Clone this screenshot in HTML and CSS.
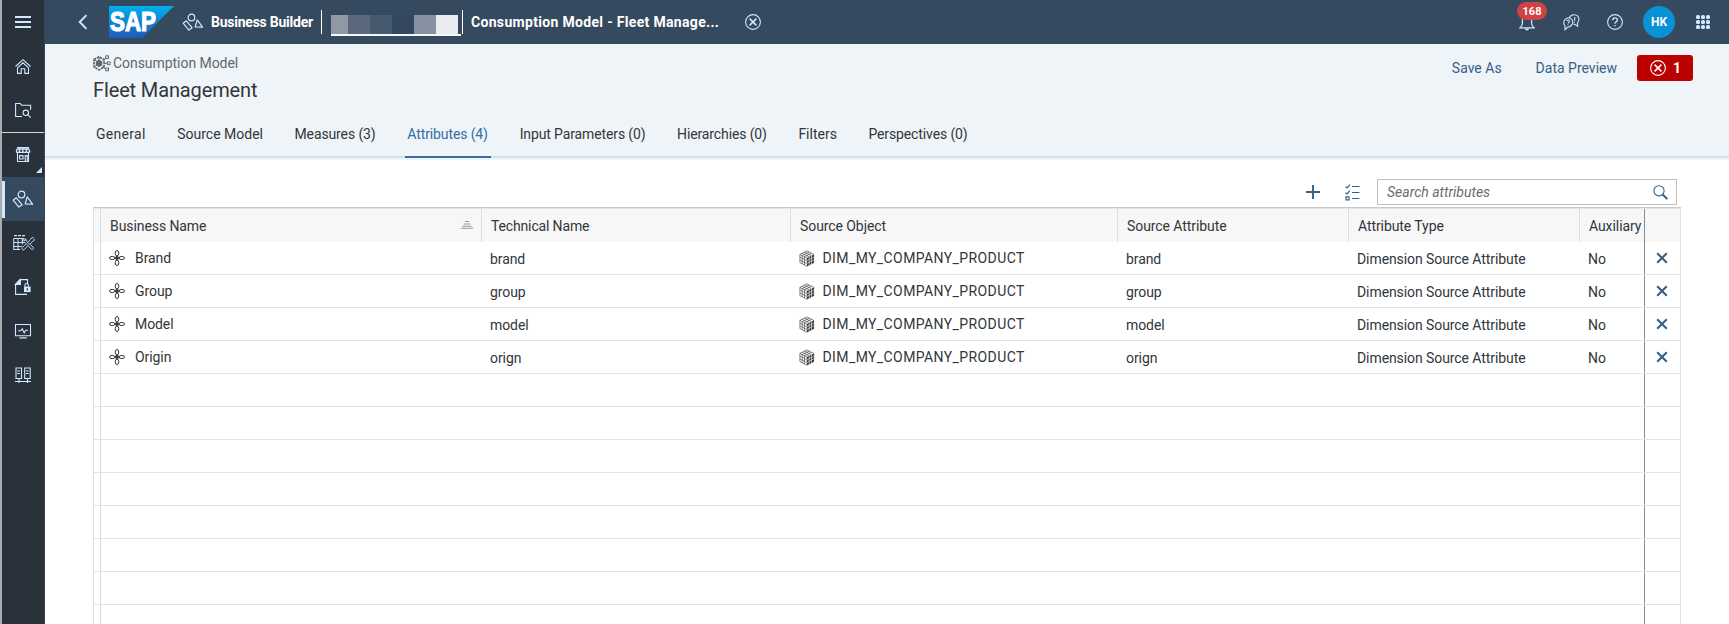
FILE: index.html
```
<!DOCTYPE html>
<html lang="en">
<head>
<meta charset="utf-8">
<title>Business Builder - Fleet Management</title>
<link rel="stylesheet" href="styles.css">
</head>
<body>
<svg class="defs" width="0" height="0">
  <defs>
    <linearGradient id="sap-blue" x1="0" y1="0" x2="0" y2="1"><stop offset="0" stop-color="#00b1eb"/><stop offset=".4" stop-color="#0d8cd6"/><stop offset="1" stop-color="#1f5bb8"/></linearGradient>
    <symbol id="i-shapes" viewBox="0 0 22 18"><g fill="none" stroke="currentColor" stroke-width="1.2" stroke-linejoin="round"><circle cx="9.5" cy="4.5" r="3.3"/><path d="M1.2 10.2 4.3 7.8 10.2 14.8 6.9 17.1zM15.2 6.8 20.6 14.2 13.2 14z"/></g></symbol>
    <symbol id="i-attr" viewBox="0 0 16 16"><g fill="none" stroke="currentColor"><ellipse cx="8" cy="3.2" rx="1.8" ry="2.7"/><ellipse cx="8" cy="12.8" rx="1.8" ry="2.7"/><ellipse cx="3.2" cy="8" rx="2.7" ry="1.6"/><ellipse cx="12.8" cy="8" rx="2.7" ry="1.6"/></g><circle cx="8" cy="8" r="2" fill="currentColor"/></symbol>
    <symbol id="i-cube" viewBox="0 0 16 17"><path d="M7.800 8 14.800 4.500v8.200L7.800 16.300z" fill="currentColor"/><g fill="none" stroke="currentColor" stroke-width=".6" stroke-linejoin="round"><path d="M.9 4.400 7.800.9l6.900 3.500v8.200L7.800 16.200.9 12.600zM.9 4.400 7.800 8M3.200 3.300l6.900 3.500M5.500 2.100l6.900 3.500M5.500 6.800l6.900-3.500M3.200 5.600l6.900-3.500M3.200 5.600v8.200M5.500 6.800V15M.9 7.100l6.900 3.600M.9 9.900l6.900 3.600"/></g><path d="M10.200 6.500v9M12.500 5.500v9M7.800 10.800l7-3.600M7.800 13.500l7-3.600" stroke="#fff" stroke-width=".6"/></symbol>
    <symbol id="i-x" viewBox="0 0 12 12"><path d="M1.200 1.200l9.600 9.600M10.800 1.200l-9.600 9.600" fill="none" stroke="currentColor" stroke-width="2.100"/></symbol>
    <symbol id="i-xcircle" viewBox="0 0 16 16"><g fill="none" stroke="currentColor" stroke-width="1.100"><circle cx="8" cy="8" r="7.400"/><path d="M4.600 4.600l6.800 6.800M11.400 4.600l-6.800 6.800" stroke-width="1.500"/></g></symbol>
  </defs>
</svg>
<div class="app">
  <nav class="side">
    <a class="item"><svg viewBox="2 0 42 44"><path d="M15 17h16M15 22h16M15 27h16" stroke="currentColor" stroke-width="1.800"/></svg></a>
    <a class="item"><svg viewBox="2 0 42 44" class="line"><path d="M15.500 22.500 23 15.700l7.500 6.800M17.500 23.800 23 18.800l5.500 5M17.500 23.500v5.900h3.700v-4.700h3.600v4.700h3.700v-5.900"/></svg></a>
    <a class="item"><svg viewBox="2 0 42 44" class="line"><path d="M22 28.500h-6.400v-13h4.600l1.400 1.700h9v4.600"/><circle cx="25.800" cy="24.800" r="2.700"/><path d="M27.800 26.800l3 2.800"/></svg></a>
    <hr class="rule">
    <a class="item"><svg viewBox="2 0 42 44" class="line"><path d="M17.500 20v8.500h11V20M17 14.600h12M19.600 22.600h3.400v3.400h-3.400zM25.200 28.400v-5.800h2v5.800"/><path d="M16.200 18.700 17.300 16h11.400l1.100 2.700q-1.600 1.400-3.200 0-1.800 1.400-3.600 0-1.800 1.400-3.600 0-1.600 1.400-3.200 0M19.500 16v2.500M22.800 16v2.500M26.300 16v2.500" stroke-width="1.300"/><path d="M42 34v6h-6z" fill="currentColor" stroke="none"/></svg></a>
    <a class="item active"><svg class="shapes"><use href="#i-shapes"/></svg></a>
    <a class="item"><svg viewBox="2 0 42 44" class="line"><path d="M13.600 17.500h9.400M13.600 21.500h11M13.600 25.500h8.400M13.600 28.500h6.400M13.700 17.500v11M18 17.500v11M22.400 17.500v6" stroke-width=".95"/><path d="M14 14.600h11.500" stroke-dasharray="3 1"/><g stroke-width=".85"><path d="M23.700 17.200q-2 .8-1.600 3 1 1.600 3 1.300l6.300 6.700q1.300.7 2-.3.400-1-.2-1.600l-6.700-6q0-2.200-1.400-2.900l.2 2-1.500.3z"/><path d="M33.600 16.300l-2.200.6-.8 1.600-3.200 3.100M25.600 23.200l-3.300 3.300q-.9 1.300.2 2.200 1.100.6 2-.3l3.200-3.300M29.700 23.500l2.700-2.900 1.600-.9.200-2.100"/></g></svg></a>
    <a class="item"><svg viewBox="2 0 42 44" class="line"><path d="M27.500 19v-4.400h-7.600l-4.300 4.800v10h11.400"/><path d="M20.400 14.500v5h-5z" fill="currentColor"/><path d="M24.900 21.600v-1.200q0-1.900 1.700-1.900t1.700 1.900v1.200"/><path d="M24 21.500h6.600v5.600H24z" fill="currentColor" stroke="none"/><path d="M27.300 23.200v2.400" stroke="#29313a"/></svg></a>
    <a class="item"><svg viewBox="2 0 42 44" class="line"><path d="M15.500 15.500h15v11.200h-15zM19.500 28.900h7.200M18 21.800h2.700l1.500-2 2 4 1.600-2.600h2.200"/></svg></a>
    <a class="item"><svg viewBox="2 0 42 44" class="line"><path d="M16 15h5.500v10.500H16zM24.700 15h5.500v10.500h-5.500zM17.300 18h2.700M17.300 20.500h2.700M26 18h2.700M26 20.500h2.700M19 25.500V30M27.500 25.500V30M15 28.500h16"/></svg></a>
  </nav>
  <div class="main">
    <header class="shell">
      <svg class="back" viewBox="0 0 10 16"><path d="M8.500 1.200 1.700 8l6.800 6.800" fill="none" stroke="currentColor" stroke-width="1.900"/></svg>
      <svg class="sap" viewBox="0 0 65 32"><path d="M0 0h65L33 32H0z" fill="url(#sap-blue)"/><text x="1" y="25.300" textLength="46" lengthAdjust="spacingAndGlyphs">SAP</text></svg>
      <svg class="shapes"><use href="#i-shapes"/></svg>
      <b class="product">Business Builder</b>
      <i class="bar"></i>
      <div class="space"><i class="m1"></i><i class="m2"></i><i class="m3"></i><i class="m4"></i><i class="m5"></i><i class="m6"></i></div>
      <i class="bar second"></i>
      <b class="crumb">Consumption Model - Fleet Manage...</b>
      <svg class="close"><use href="#i-xcircle"/></svg>
      <div class="tools">
        <div class="bell"><svg viewBox="0 0 16 18"><g fill="none" stroke="currentColor" stroke-width="1.200"><path d="M3.400 6q0-4.500 4.600-4.500T12.600 6v4.500q.3 2.500 2.400 4.300H1q2.100-1.800 2.400-4.300z"/></g><path d="M5.800 15.500h4.400q-.4 2-2.200 2t-2.200-2z" fill="currentColor"/></svg><span class="badge">168</span></div>
        <svg class="chat" viewBox="0 0 17 17"><g fill="none" stroke="currentColor" stroke-width="1.100"><path d="M2 15.700v-3.600Q-.6 8.500 2 5.600t5.600-1.200q3.300 2.500 1.700 5.700-1.600 3.200-4.800 3.200zM6.500 3.600Q8 .5 11.600.8t4.300 3.700q.2 2.700-1.400 4.500l.1 3.200-2.800-2h-1.600"/><path d="M3.800 7q.5-1.300 1.800-1 1.500.8.400 2.200-.8.600-.8 1.300M5 10.600v1M11.700 3v3.700M11.300 7.700v1"/></g></svg>
        <svg class="help" viewBox="0 0 16 16"><circle cx="8" cy="8" r="7.400" fill="none" stroke="currentColor" stroke-width="1.100"/><path d="M5.600 6.200q.2-2.300 2.400-2.300t2.400 2q0 1.100-1.300 1.900T8 9.600M8 10.900v1.400" fill="none" stroke="currentColor" stroke-width="1.400"/></svg>
        <b class="avatar">HK</b>
        <div class="grid"><i></i><i></i><i></i><i></i><i></i><i></i><i></i><i></i><i></i></div>
      </div>
    </header>
    <section class="head">
      <div class="titles">
        <div class="kind"><svg viewBox="0 0 18 17"><g fill="none" stroke="currentColor"><path d="M1 4.500 6 1.800l5 2.700v7.500l-5 2.900L1 12z" stroke-width="1.700" stroke-dasharray="2.500 .8"/><path d="M9.500 5.500 13 3M11 8.300h3.500M9.500 11.500l3 2.500M6 2v3M1.500 12l2-1.500M1.500 5l2 1"/><path d="M12.700.8h2.800v2.800h-2.800zM14.300 6.900h2.800v2.800h-2.800zM12.700 13h2.800v2.800h-2.800z"/></g><path d="M6 4.600l3.200 1.900v3.800L6 12.200l-3.200-1.900V6.500z" fill="currentColor"/></svg><span>Consumption Model</span></div>
        <h1>Fleet Management</h1>
      </div>
      <div class="actions"><a>Save As</a><a>Data Preview</a><button class="err"><svg><use href="#i-xcircle"/></svg>1</button></div>
      <div class="tabs"><a class="general">General</a><a>Source Model</a><a class="tight">Measures (3)</a><a class="on tight">Attributes (4)</a><a class="tight">Input Parameters (0)</a><a class="tight">Hierarchies (0)</a><a>Filters</a><a class="tight">Perspectives (0)</a></div>
    </section>
    <section class="content">
      <div class="toolbar">
        <svg class="plus" viewBox="0 0 14 14"><path d="M7 0v14M0 7h14" stroke="currentColor" stroke-width="1.900"/></svg>
        <svg class="list" viewBox="0 0 15 17"><g fill="none" stroke="currentColor" stroke-width="1.200"><path d="M7 2.500h7.500M7 8.500h7.500M7 14.500h7.500" stroke-width="1"/><path d="M.4 2.600 2 4 4.900.7M.4 8.600 2 10l2.900-3.300M1 12.800h3v3H1z"/></g></svg>
        <div class="search"><em>Search attributes</em><svg viewBox="0 0 15 15"><circle cx="6" cy="5.800" r="5.100" fill="none" stroke="currentColor" stroke-width="1.100"/><path d="M9.700 9.500l4.600 4.600" stroke="currentColor" stroke-width="2"/></svg></div>
      </div>
      <div class="table">
        <div class="row hdr"><span></span><span>Business Name<svg class="sort" viewBox="0 0 12 8"><path d="M4 .5h4M2.700 3h6.600M1.300 5.200h9.400M0 7.300h12" stroke="#999" stroke-width="1.100"/></svg></span><span class="tech">Technical Name</span><span>Source Object</span><span>Source Attribute</span><span>Attribute Type</span><span>Auxiliary</span><span></span></div>
        <div class="row"><span></span><span class="icon"><svg class="attr"><use href="#i-attr"/></svg>Brand</span><span>brand</span><span class="icon dim"><svg class="cube"><use href="#i-cube"/></svg>DIM_MY_COMPANY_PRODUCT</span><span>brand</span><span>Dimension Source Attribute</span><span>No</span><span class="del"><svg><use href="#i-x"/></svg></span></div>
        <div class="row"><span></span><span class="icon"><svg class="attr"><use href="#i-attr"/></svg>Group</span><span>group</span><span class="icon dim"><svg class="cube"><use href="#i-cube"/></svg>DIM_MY_COMPANY_PRODUCT</span><span>group</span><span>Dimension Source Attribute</span><span>No</span><span class="del"><svg><use href="#i-x"/></svg></span></div>
        <div class="row"><span></span><span class="icon"><svg class="attr"><use href="#i-attr"/></svg>Model</span><span>model</span><span class="icon dim"><svg class="cube"><use href="#i-cube"/></svg>DIM_MY_COMPANY_PRODUCT</span><span>model</span><span>Dimension Source Attribute</span><span>No</span><span class="del"><svg><use href="#i-x"/></svg></span></div>
        <div class="row"><span></span><span class="icon"><svg class="attr"><use href="#i-attr"/></svg>Origin</span><span>orign</span><span class="icon dim"><svg class="cube"><use href="#i-cube"/></svg>DIM_MY_COMPANY_PRODUCT</span><span>orign</span><span>Dimension Source Attribute</span><span>No</span><span class="del"><svg><use href="#i-x"/></svg></span></div>
        <div class="row"><span></span><span></span><span></span><span></span><span></span><span></span><span></span><span></span></div>
        <div class="row"><span></span><span></span><span></span><span></span><span></span><span></span><span></span><span></span></div>
        <div class="row"><span></span><span></span><span></span><span></span><span></span><span></span><span></span><span></span></div>
        <div class="row"><span></span><span></span><span></span><span></span><span></span><span></span><span></span><span></span></div>
        <div class="row"><span></span><span></span><span></span><span></span><span></span><span></span><span></span><span></span></div>
        <div class="row"><span></span><span></span><span></span><span></span><span></span><span></span><span></span><span></span></div>
        <div class="row"><span></span><span></span><span></span><span></span><span></span><span></span><span></span><span></span></div>
        <div class="row"><span></span><span></span><span></span><span></span><span></span><span></span><span></span><span></span></div>
      </div>
    </section>
  </div>
</div>
</body>
</html>
```
FILE: styles.css
```
* { box-sizing: border-box; }
body { margin: 0; font: 14px/20px Roboto, "Liberation Sans", sans-serif; color: #32363a; background: #fff; overflow: hidden; }
svg { display: block; flex: none; }
.defs { position: absolute; }
.app { display: flex; height: 624px; overflow: hidden; }

.side { flex: none; width: 45px; border-left: 2px solid #a9adb0; border-right: 1px solid #3a4357; background: #29313a; color: #d1e8ff; }
.item { display: flex; align-items: center; height: 44px; }
.item svg { width: 42px; height: 44px; }
.line { fill: none; stroke: currentColor; stroke-width: 1.1; }
.rule { margin: 0; border: 0; height: 1px; background: #d5d8da; }
.item.active { background: #354a5f; }
.item.active::before { content: ""; width: 3px; height: 37px; background: #d1e8ff; }
.item svg.shapes { margin: 0 0 0 7px; }
.item svg.shapes, .shapes { width: 22px; height: 18px; }

.main { flex: 1; min-width: 0; }
.shell { display: flex; align-items: center; height: 44px; padding-left: 33px; background: #354a5f; color: #d1e8ff; }
.shell b { color: #fff; white-space: nowrap; }
.back { width: 10px; height: 16px; }
.sap { width: 65px; height: 32px; margin: 0 8px 0 21px; }
.sap text { font: bold 27px "Liberation Sans", sans-serif; fill: #fff; stroke: #fff; stroke-width: 1.2px; }
.product { width: 110px; margin-left: 7px; letter-spacing: -.24px; }
.bar { width: 1px; height: 24px; background: #fff; }
.space { display: flex; width: 130px; height: 21px; margin: 6px 0 0 9px; border-bottom: 2px solid #f4f6f8; }
.space i { width: 22px; }
.space .m1 { width: 17px; background: #8f99a6; }
.m2 { background: #5a6a7c; }
.m3 { background: #475b6e; }
.m4 { background: #33485f; }
.m5 { background: #8791a1; }
.m6 { background: #e9ecf0; }
.second { margin: 0 8px 0 1px; }
.crumb { width: 274px; letter-spacing: .32px; }
.close { width: 16px; height: 16px; }
.tools { display: flex; align-items: center; margin-left: auto; }
.bell { position: relative; margin-right: 28px; }
.bell svg { width: 16px; height: 18px; }
.badge { position: absolute; left: -2px; top: -11px; width: 30px; height: 18px; border-radius: 9px; background: #d04343; color: #fff; font: bold 11px/19px Roboto, sans-serif; text-align: center; }
.chat { width: 17px; height: 17px; margin-right: 27px; }
.help { width: 16px; height: 16px; margin-right: 20px; }
.avatar { width: 32px; height: 32px; border-radius: 50%; background: #0a92d6; font-size: 12px; line-height: 32px; text-align: center; }
.grid { display: grid; grid-template-columns: repeat(3, 4px); gap: 1px; margin: 0 19px 0 21px; }
.grid i { height: 4px; border-radius: 1.5px; background: #d1e8ff; }

.head { display: grid; grid-template-columns: 1fr auto; grid-template-rows: 68px 46px; height: 116px; padding-left: 48px; background: #eff4f9; border-bottom: 2px solid #eff4f9; }
.titles { padding-top: 9px; }
.kind { display: flex; align-items: center; gap: 2px; color: #5d686e; letter-spacing: -.05px; }
.kind svg { width: 18px; height: 17px; }
h1 { margin: 5px 0 0; font: 20px/24px Roboto, sans-serif; letter-spacing: -.13px; }
.actions { display: flex; padding: 11px 36px 0 0; color: #346187; line-height: 27px; }
.actions a { margin-right: 34px; }
.actions a + a { margin-right: 20px; }
.err { display: flex; align-items: center; gap: 7px; width: 56px; height: 26px; padding: 0 0 0 13px; border: 0; border-radius: 3px; background: #b00; color: #fff; font: bold 14px Roboto, sans-serif; }
.err svg { width: 16px; height: 16px; }
.tabs { grid-column: 1 / 3; display: flex; gap: 26.5px; margin-left: -48px; padding-left: 48px; border-bottom: 2px solid #d1e0ee; line-height: 44px; }
.tabs a { height: 46px; padding: 0 2.5px; }
.tabs .general { padding-left: 3px; letter-spacing: .3px; }
.tight { letter-spacing: -.12px; }
.tabs .on { padding: 0 2.8px; color: #346ea3; border-bottom: 2px solid #346ea3; }

.content { padding: 19px 48px 0; }
.toolbar { display: flex; align-items: center; justify-content: flex-end; height: 26px; padding-right: 4px; color: #346187; }
.plus { width: 14px; height: 14px; }
.list { width: 15px; height: 17px; margin: 0 17px 0 25px; }
.search { display: flex; align-items: center; justify-content: space-between; width: 300px; height: 26px; padding: 0 8px 0 9px; border: 1px solid #bfbfbf; }
.search em { color: #6a6d70; }
.search svg { width: 15px; height: 15px; }
.table { width: 1588px; margin-top: 2px; border: 1px solid #e0e0e0; border-top: 1px solid #c8c8c8; letter-spacing: -.08px; }
.row { display: grid; grid-template-columns: 7px 381px 309px 327px 231px 231px 65px 35px; height: 33px; border-bottom: 1px solid #e4e4e4; }
.row span { padding: 1px 0 0 8px; line-height: 32px; white-space: nowrap; overflow: hidden; }
.row span:first-child { padding: 0; border-right: 1px solid #dcdcdc; }
.row span:nth-child(7) { border-right: 1px solid #8c8c8c; }
.row .icon { display: flex; align-items: center; padding-top: 0; }
.attr { width: 16px; height: 16px; margin-right: 10px; }
.cube { width: 16px; height: 17px; margin-right: 8px; }
.row .dim { padding-left: 7.5px; letter-spacing: .4px; }
.row .del { display: flex; align-items: center; padding: 0 0 0 11px; color: #346187; }
.del svg { width: 12px; height: 12px; }
.hdr { height: 34px; background: #f7f7f7; border-top: 1px solid #e5e5e5; border-bottom: 0; }
.hdr span { display: flex; align-items: center; padding: 1px 8px 0 9px; border-right: 1px solid #ddd; line-height: 33px; }
.hdr span:nth-child(7) { padding-right: 0; }
.hdr span:last-child { border: 0; }
.tech { letter-spacing: -.15px; }
.sort { width: 12px; height: 8px; margin: -3px 0 0 auto; }
```
